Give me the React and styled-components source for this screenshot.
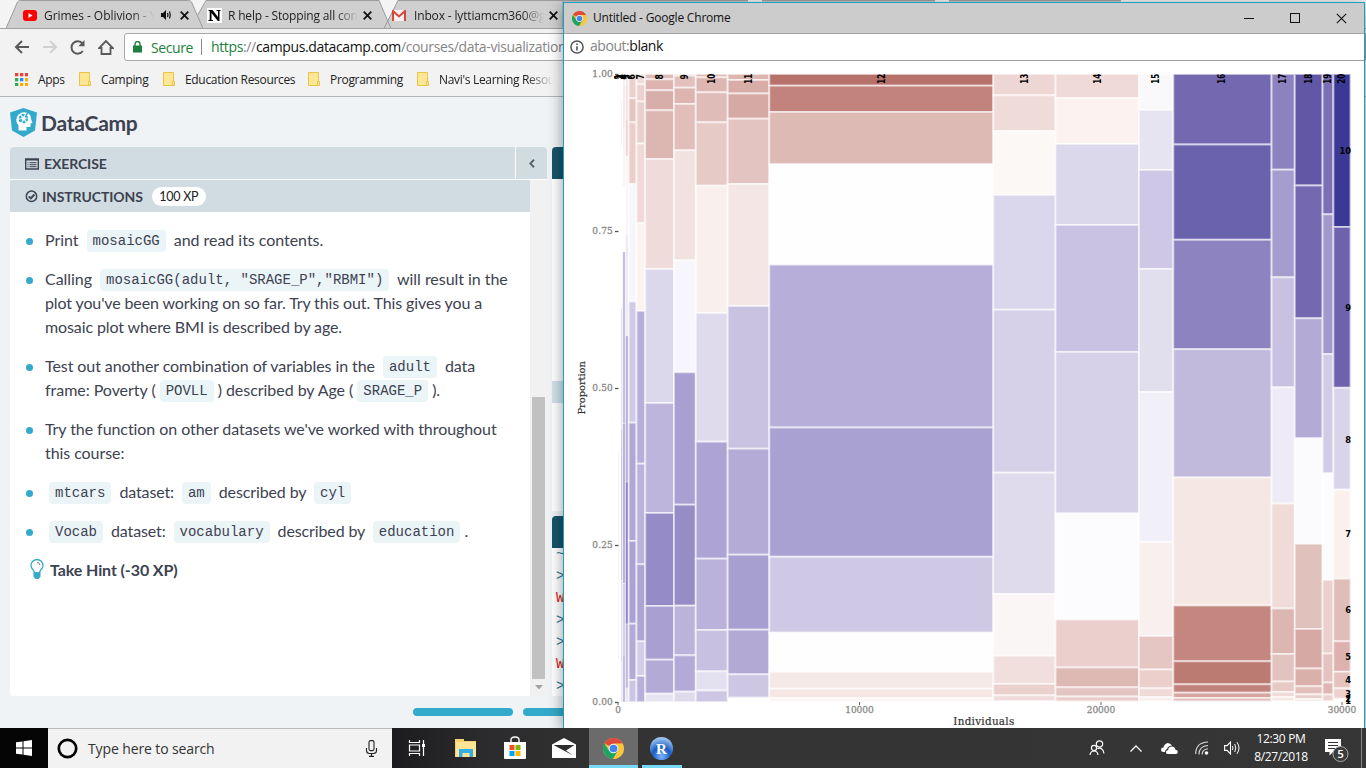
import React from 'react';
import styled, { createGlobalStyle, css } from 'styled-components';

const ui = '"Open Sans", "Noto Sans", sans-serif';
const GlobalStyle = createGlobalStyle`
  * { box-sizing: border-box; }
  body { margin: 0; overflow: hidden; }
  svg { display: block; flex: none; }
`;

const Desktop = styled.div`
  position: relative;
  width: 1366px;
  height: 768px;
  display: flex;
  flex-direction: column;
  overflow: hidden;
  background: #cdcdcd;
`;

/* ---------- browser window ---------- */
const Browser = styled.main`
  height: 728px;
  display: flex;
  flex-direction: column;
  background: #eff3f5;
  font-family: ${ui};
`;
const TabStrip = styled.div`
  position: relative;
  height: 29px;
  flex: none;
  background: #e3e3e3;
`;
const TabShapes = styled.svg`
  position: absolute;
  left: 0;
  top: 0;
`;
const TabRow = styled.div`
  position: relative;
  height: 29px;
  display: flex;
  padding-left: 23px;
`;
const Tab = styled.div`
  width: ${p => p.$w}px;
  height: 30px;
  display: flex;
  align-items: center;
  flex: none;
`;
const TabTitle = styled.span`
  width: ${p => p.$w}px;
  margin-left: ${p => p.$gap}px;
  margin-right: ${p => p.$after || 0}px;
  overflow: hidden;
  white-space: nowrap;
  font-size: 12px;
  letter-spacing: ${p => p.$ls || 0}px;
  color: #222;
  mask-image: linear-gradient(90deg, #000 calc(100% - 22px), transparent);
`;
const SpeakerIcon = styled.svg`
  margin: 0 6px 0 7px;
`;
const Toolbar = styled.div`
  height: 33px;
  flex: none;
  display: flex;
  align-items: flex-start;
  padding: 4px 0 0 14px;
  background: #f2f2f2;
`;
const NavIcon = styled.div`
  width: 28px;
  height: 28px;
  display: flex;
  align-items: center;
`;
const AddressBar = styled.div`
  flex: 1;
  height: 28px;
  margin-left: -2px;
  display: flex;
  align-items: center;
  padding-left: 8px;
  background: #fff;
  border: 1px solid #aaa;
  border-radius: 3px 0 0 3px;
  font-size: 14px;
  white-space: nowrap;
`;
const Secure = styled.span`
  color: #1c7f3c;
  margin-left: 9px;
  width: 50px;
  letter-spacing: -0.4px;
`;
const Url = styled.span`
  color: #111;
  border-left: 1px solid #888;
  line-height: 16px;
  padding-left: 9px;
  letter-spacing: ${p => p.$ls}px;
  i { font-style: normal; color: #1c7f3c; }
  b { font-weight: 400; color: #858585; }
`;
const Bookmarks = styled.div`
  height: 35px;
  flex: none;
  display: flex;
  align-items: center;
  padding-left: 15px;
  background: #f2f2f2;
  border-bottom: 1px solid #b4b4b4;
`;
const Bookmark = styled.div`
  width: ${p => p.$w}px;
  flex: none;
  display: flex;
  align-items: center;
  gap: 10px;
  overflow: hidden;
  white-space: nowrap;
  font-size: 12px;
  letter-spacing: -0.32px;
  color: #222;
  ${p => p.$fade && css`mask-image: linear-gradient(90deg, #000 80%, transparent);`}
`;

/* ---------- course page ---------- */
const Page = styled.div`
  flex: 1;
  display: flex;
  flex-direction: column;
  color: #3d4251;
  font-family: Lato, sans-serif;
`;
const Brand = styled.header`
  height: 50px;
  display: flex;
  align-items: center;
  padding: 0 0 0 10px;
  gap: 4px;
  font-size: 21px;
  font-weight: 700;
  letter-spacing: -0.25px;
`;
const Columns = styled.div`
  height: 549px;
  display: flex;
  gap: 5px;
  padding: 0 12px 0 10px;
`;
const LeftPanel = styled.section`
  width: 537px;
  display: flex;
  flex-direction: column;
  background: #fff;
  border-radius: 4px 4px 3px 3px;
  overflow: hidden;
`;
const Bar = styled.div`
  height: 32px;
  flex: none;
  display: flex;
  align-items: center;
  background: #d0dce1;
  font-size: 14px;
  font-weight: 700;
  letter-spacing: -0.1px;
`;
const BarTitle = styled.div`
  flex: 1;
  height: 100%;
  display: flex;
  align-items: center;
  gap: ${p => p.$gap}px;
  padding: 1px 0 0 15px;
`;
const Collapse = styled.div`
  width: 32px;
  height: 100%;
  display: flex;
  align-items: center;
  justify-content: center;
  border-left: 1px solid #fff;
`;
const XpBadge = styled.span`
  width: 54px;
  height: 19px;
  margin-left: 5px;
  border-radius: 10px;
  background: #fff;
  font-size: 12.5px;
  font-weight: 400;
  color: #222;
  line-height: 19px;
  text-align: center;
  letter-spacing: -0.25px;
`;
const PanelBody = styled.div`
  flex: 1;
  display: flex;
  margin-top: 1px;
`;
const Instructions = styled.div`
  width: 520px;
`;
const List = styled.ul`
  margin: 0;
  padding: 16px 0 0 35px;
  list-style: none;
  display: flex;
  flex-direction: column;
  gap: 15px;
  font-size: 16px;
  line-height: 24px;
`;
const Item = styled.li`
  position: relative;
  white-space: nowrap;
  &::before {
    content: '';
    position: absolute;
    left: -19px;
    top: 10px;
    width: 7px;
    height: 7px;
    border-radius: 50%;
    background: #33aacc;
  }
`;
const Line = styled.div`
  height: 24px;
  letter-spacing: ${p => p.$ls || 0}px;
`;
const Code = styled.code`
  display: inline-block;
  height: 22px;
  padding: 0 6px;
  margin: 2px 4px 0;
  vertical-align: top;
  border-radius: 4px;
  background: #ebf4f7;
  font: 14px/23px "Liberation Mono", monospace;
  letter-spacing: 0;
`;
const Hint = styled.div`
  display: flex;
  align-items: center;
  gap: 6px;
  height: 26px;
  margin-top: 13px;
  padding-left: 20px;
  font-size: 16px;
  font-weight: 700;
  letter-spacing: -0.1px;
`;
const Scrollbar = styled.div`
  width: 17px;
  display: flex;
  flex-direction: column;
  align-items: center;
  padding-top: 217px;
  background: #f1f1f1;
`;
const Thumb = styled.div`
  width: 13px;
  height: 282px;
  margin-bottom: 6px;
  background: #c1c1c1;
`;
const RightPanel = styled.section`
  flex: 1;
  display: flex;
  flex-direction: column;
`;
const DarkHead = styled.div`
  height: 32px;
  border-radius: 4px 0 0 0;
  background: #17546a;
`;
const Editor = styled.div`
  height: 332px;
  margin-bottom: 5px;
  padding-top: 202px;
  background: #fff;
`;
const ActiveLine = styled.div`
  height: 22px;
  background: #cfe3ea;
`;
const Console = styled.div`
  height: 148px;
  padding: 0 0 0 4px;
  overflow: hidden;
  background: #fff;
  display: flex;
  flex-direction: column;
  justify-content: flex-end;
`;
const ConsoleLine = styled.div`
  height: 22px;
  flex: none;
  font: 14px/24px "Liberation Mono", monospace;
  color: ${p => (p.$error ? '#e01b1b' : '#2f7891')};
`;
const Progress = styled.div`
  display: flex;
  gap: 10px;
  padding: 12px 0 0 413px;
`;
const Pill = styled.div`
  width: 100px;
  height: 8px;
  border-radius: 4px;
  background: #33aacc;
`;

/* ---------- plot window ---------- */
const Popup = styled.section`
  position: absolute;
  left: 563px;
  top: 2px;
  width: 802px;
  height: 726px;
  display: flex;
  flex-direction: column;
  background: #fff;
  border: 1px solid #1c9fc0;
  border-bottom: 0;
  box-shadow: 0 3px 14px rgba(0, 0, 0, 0.42);
  font-family: ${ui};
`;
const TitleBar = styled.div`
  height: 31px;
  flex: none;
  display: flex;
  align-items: center;
  padding-left: 8px;
  background: #ccc;
  border-bottom: 1px solid #a3a3a3;
  font-size: 12px;
  color: #111;
`;
const WindowTitle = styled.span`
  flex: 1;
  margin: -2px 0 0 6px;
  letter-spacing: -0.2px;
`;
const WindowButton = styled.div`
  width: 46px;
  display: flex;
  justify-content: center;
`;
const PopupAddress = styled.div`
  height: 27px;
  flex: none;
  display: flex;
  align-items: center;
  padding-left: 6px;
  border-bottom: 1px solid #a0a0a0;
`;
const AboutText = styled.div`
  margin: -2px 0 0 6px;
  font-size: 14px;
  line-height: 20px;
  color: ${p => (p.$dim ? '#858585' : '#111')};
  letter-spacing: -0.45px;
`;
const Dim = styled.span`
  color: #858585;
`;

/* ---------- taskbar ---------- */
const Taskbar = styled.footer`
  position: relative;
  height: 40px;
  display: flex;
  background: linear-gradient(90deg, #1c1b1d 392px, #2b2b2d 480px, #333 620px, #363636);
  color: #fff;
  font-family: ${ui};
`;
const Start = styled.div`
  width: 48px;
  display: flex;
  align-items: center;
  justify-content: center;
  background: #050505;
`;
const Search = styled.div`
  width: 344px;
  display: flex;
  align-items: center;
  padding: 0 14px 0 9px;
  gap: 10px;
  background: #f2f2f2;
  border-top: 1px solid #b9b9b9;
  color: #333;
  font-size: 14px;
  letter-spacing: -0.12px;
  span { flex: 1; }
`;
const Launch = styled.div`
  width: 49.2px;
  display: flex;
  align-items: center;
  justify-content: center;
  background: ${p => (p.$active ? '#6b6b6b' : 'transparent')};
  border-bottom: ${p => (p.$open ? '3px solid #76d9f5' : '0')};
  padding-top: ${p => (p.$open ? 3 : 0)}px;
`;
const OpenApp = styled(Launch)`
  width: 40px;
  margin-left: 4px;
`;
const Tray = styled.div`
  margin-left: auto;
  display: flex;
`;
const TrayCell = styled.div`
  width: ${p => p.$w}px;
  display: flex;
  align-items: center;
  justify-content: center;
`;
const Clock = styled.div`
  width: 76px;
  padding-top: 2px;
  text-align: center;
  font-size: 12px;
  line-height: 18px;
  letter-spacing: -0.35px;
`;
const ShowDesktop = styled.div`
  width: 5px;
  border-left: 1px solid #888;
`;

/* ---------- icons ---------- */
const CloseX = ({ size = 9, w = 1.8 }) => (
  <svg width={size} height={size} viewBox="0 0 9 9"><path d="M.7.7l7.6 7.6M8.3.7L.7 8.3" stroke="#111" strokeWidth={w} /></svg>
);
const ChromeIcon = ({ size }) => (
  <svg width={size} height={size} viewBox="0 0 48 48">
    <circle cx="24" cy="24" r="24" fill="#fbc637" />
    <path d="M24 24L3.2 12A24 24 0 0 1 44.8 12.500L24 13z" fill="#dd4b3e" />
    <path d="M3.200 12A24 24 0 0 0 23 48L34 30 24 24 14.500 30z" fill="#1da362" />
    <path d="M24 13h20.800A24 24 0 0 1 23 48L33.500 29.500z" fill="#fbc637" />
    <circle cx="24" cy="24" r="11" fill="#f1f1f1" />
    <circle cx="24" cy="24" r="8.800" fill="#4285f4" />
  </svg>
);
const Folder = () => (
  <svg width="12" height="14" viewBox="0 0 12 14">
    <path d="M.5.5h10v9h1v4H.5z" fill="#ffe694" stroke="#e8c449" /><path d="M9.500 13V9.500h1.500" fill="none" stroke="#e8c449" />
  </svg>
);
const AppsIcon = () => {
  const c = ['#ea4335', '#ea4335', '#ea4335', '#34a853', '#1a8cff', '#fbab00', '#34a853', '#fbab00', '#fbab00'];
  return <svg width="13" height="13">{c.map((f, i) => <rect key={i} x={(i % 3) * 5} y={Math.floor(i / 3) * 5} width="3.300" height="3.300" fill={f} />)}</svg>;
};

/* ---------- mosaic data: [x0, x1, edges, fills] ---------- */
const mosaic = [
  [618.2, 619, [454, 658], ['#ededf3']],
  [621, 622, [100, 106, 146], ['#f7efee', '#f7efee']],
  [621, 622.2, [308, 429, 581, 662, 702], ['#e2deef', '#c8c1e2', '#d8d3e9', '#e6e3f1']],
  [623, 625, [74, 86, 127, 186], ['#f8edeb', '#f5e8e6', '#fbf1ef']],
  [622.8, 625.2, [252, 423.5, 583.5, 655, 702], ['#c4bde0', '#b9b0da', '#d3cde8', '#c4bde0']],
  [625.7, 628.2, [74, 84, 119.3, 156, 235, 336, 482, 624, 688, 702], ['#f5e6e5', '#f5e3e1', '#efd5d3', '#fcf5f3', '#ebe9f6', '#b5addb', '#8f85c4', '#bdb5dc', '#e7e4f2']],
  [628.7, 636.5, [74, 98.3, 122.3, 184, 301.5, 422.7, 541, 623.7, 680, 702], ['#ebd1ce', '#e4c4c0', '#e9cec9', '#f7f6fc', '#d0cae6', '#b0a7d5', '#aba1d2', '#b3aad7', '#cbc5e3']],
  [636.5, 645.2, [74, 84.3, 101.5, 143.5, 223, 311, 463.7, 564.3, 641.3, 676, 702], ['#efdcda', '#ecd1cf', '#e9d0cd', '#efdad8', '#faf3f0', '#b7afd9', '#bbb3db', '#ada4d2', '#d3cde7', '#b8b0da']],
  [645.2, 674, [74, 79.3, 90.3, 110.3, 159, 269, 403, 513, 606, 659.7, 693.7, 702], ['#dfbcb8', '#dcb3af', '#d7aea9', '#dcb7b1', '#efdcda', '#dcd8ec', '#bdb5dc', '#958bc6', '#a99fd1', '#b3abd6', '#e7e4f1']],
  [674, 695.8, [74, 75.7, 87.7, 104, 150.3, 260.3, 372.3, 504.7, 605.7, 655.3, 691.7, 702], ['#e8c9c5', '#e2c0bc', '#dcb4b0', '#e1beba', '#f1e2df', '#f7f6fc', '#a99fd1', '#978dc6', '#bcb3db', '#b4aad7', '#dfdbec']],
  [695.8, 727.7, [74, 77.3, 92.3, 122.3, 185.7, 313, 441.7, 558.7, 630, 671.3, 690.5, 702], ['#dfb9b4', '#ddb6b1', '#e0bcb8', '#e6cac6', '#f9f0ee', '#dfdbec', '#ada4d3', '#bab2da', '#c7c0e1', '#e3e0ef', '#cdc7e5']],
  [727.7, 769.3, [74, 80, 93.5, 118.7, 184, 306, 448.7, 554.7, 629.7, 674.3, 697.5], ['#ddb5b1', '#d8aca7', '#d6a9a4', '#e3c4c0', '#f4e6e4', '#c9c2e1', '#b4acd7', '#a89fd1', '#b2a9d5', '#cdc7e4']],
  [769.3, 993.3, [74, 85.7, 112, 164.3, 264.7, 427.5, 556.8, 632.7, 671.7, 688.7, 698, 702], ['#b5716a', '#c2837d', '#ddbab4', '#fefefe', '#b7afd9', '#aaa1d3', '#cfc9e6', '#fefefe', '#f5e9e6', '#f6e6e4', '#fcf5f4']],
  [993.3, 1055.5, [74, 95.3, 131, 195, 309.7, 472.7, 594, 655.7, 684, 695.3, 701], ['#edd6d3', '#efdcd9', '#fbf8f6', '#dad6ec', '#d6d1e9', '#dfdbec', '#faf6f5', '#f1dfdd', '#ead1cd', '#efdcda']],
  [1055.5, 1139, [74, 98, 144, 225, 352, 513.5, 619.5, 667.5, 687.3, 696.5, 701.3], ['#efdad8', '#fcf2f0', '#dcd8ec', '#c9c2e3', '#d6d1e9', '#fcfcfe', '#ebcfcc', '#deb9b3', '#e3c4c0', '#e9cdca']],
  [1139, 1173.3, [74, 110, 170, 269, 392, 542, 636, 669.5, 688.3, 697, 701], ['#f9f9fc', '#e7e4f2', '#cec7e5', '#e1deee', '#f1f0f9', '#f8f0ee', '#e5c6c2', '#eacfcb', '#efdad7', '#f8eeec']],
  [1173.3, 1271.6, [74, 144.5, 239.8, 349.2, 477.5, 605.5, 661.3, 684.3, 692.7, 698, 701.3], ['#7469b1', '#6b62ae', '#8d83c1', '#c1badc', '#f5e7e4', '#c4877f', '#bb7b72', '#c1827c', '#d7a6a1', '#e3bdb9']],
  [1271.6, 1294.8, [74, 169.7, 277.3, 387.3, 503.5, 608.5, 654, 681.5, 692, 697, 701], ['#8d82c0', '#a69dcf', '#c8c1e1', '#eeebf6', '#efdbd8', '#dcb6b1', '#e3c3bf', '#e7c9c5', '#efdad8', '#f5e8e6']],
  [1294.8, 1322.6, [74, 185.5, 318.3, 438.3, 543.8, 629, 668.5, 686.3, 694.3, 699, 701.3], ['#6256a6', '#7469b1', '#b3aad6', '#fbfbfd', '#e1c1bc', '#d7a9a4', '#dbb0ab', '#e3bfbb', '#e9ceca', '#f3e3e1']],
  [1322.6, 1333.4, [74, 214.3, 354, 473.3, 580, 653.5, 682.5, 694.5, 701], ['#7b70b5', '#a298cc', '#d1cbe6', '#fcfcfe', '#ebcfcc', '#e4c2be', '#dfb6b1', '#ecd2cf']],
  [1333.4, 1350.5, [74, 227, 387.8, 489.7, 578.7, 641.3, 671.8, 688.3, 698.5], ['#3b3896', '#6e62af', '#d9d4ea', '#faf1ef', '#e1bdb8', '#ddb2ae', '#e5c2be', '#edd1cf']],
];
const topLabels = [
  [619, '1'], [620, '2'], [621.5, '3'], [623.5, '4'], [626.5, '5'], [632, '6'], [641, '7'], [659.5, '8'], [685, '9'], [711.5, '10'], [748.7, '11'], [881.5, '12'],
  [1024.5, '13'], [1097.5, '14'], [1155.5, '15'], [1222, '16'], [1283, '17'], [1308.5, '18'], [1328, '19'], [1341.7, '20'],
];
const rightLabels = [[150.5, '10'], [307.5, '9'], [439.7, '8'], [534, '7'], [609.7, '6'], [656.5, '5'], [680.3, '4'], [693.5, '3'], [699, '2'], [701, '1']];

const Mosaic = () => (
  <svg width="800" height="667" viewBox="564 61 800 667">
    {mosaic.map(([x0, x1, edges, fills], c) => (
      <g key={c}>
        {fills.map((f, i) => (
          <rect key={i} x={x0} y={edges[i]} width={x1 - x0} height={edges[i + 1] - edges[i]} fill={f}
            stroke="#fff" strokeOpacity="0.55" strokeWidth={x1 - x0 < 4 ? 0.5 : 2} />
        ))}
      </g>
    ))}
    <g fontFamily="DejaVu Serif, serif" fontSize="9" fill="#8a8a8a" stroke="#8a8a8a" strokeWidth="0.3">
      {[['1.00', 74], ['0.75', 231], ['0.50', 388], ['0.25', 545], ['0.00', 702]].map(([t, y]) => (
        <g key={t}>
          <text x="612.800" y={y + 3.300} textAnchor="end" textLength="20.500">{t}</text>
          <path d={`M615 ${y + 0.5}h3.500`} stroke="#555" strokeWidth="1.300" />
        </g>
      ))}
      {[['0', 618], ['10000', 859.5], ['20000', 1101], ['30000', 1342]].map(([t, x]) => (
        <g key={t}>
          <text x={x} y="713.300" textAnchor="middle">{t}</text>
          <path d={`M${x} 702v3`} stroke="#666" strokeWidth="1" />
        </g>
      ))}
    </g>
    <g fontFamily="DejaVu Serif, serif" fontSize="10.400" fill="#333" stroke="#333" strokeWidth="0.2">
      <text x="953.300" y="724.500" textLength="61">Individuals</text>
      <text transform="translate(584.500 414.500) rotate(-90)" textLength="53.500" fontSize="10">Proportion</text>
    </g>
    <g fontFamily="DejaVu Sans, sans-serif" fontWeight="700" fontSize="8.300" fill="#000">
      {topLabels.map(([x, t]) => (
        <text key={t} transform={`translate(${x + 3.2} ${t.length > 1 ? 83.7 : 79.5}) rotate(-90)`} textLength={t.length > 1 ? 10 : 5.3} lengthAdjust="spacingAndGlyphs" fontSize="9.600">{t}</text>
      ))}
      {rightLabels.map(([y, t]) => <text key={t} x="1351" y={y + 3} textAnchor="end">{t}</text>)}
    </g>
  </svg>
);

const Shapes = () => (
  <TabShapes width="1366" height="29" viewBox="0 0 1366 29">
    <rect width="1366" height="29" fill="#f4f4f4" />
    <path d="M384 28.500l7-14 7-14h165v28zM192 28.500l6-14L206 .5h173l12 28z" fill="#cfcfcf" stroke="#9b9b9b" />
    <path d="M6 28.500L17.500 2q1-1.500 3-1.500h168q2 0 3 1.500L203 28.500z" fill="#cfcfcf" stroke="#9b9b9b" />
    <path d="M563 .8h185M762 .8h173M949 .8h172" stroke="#a2a2a2" strokeWidth="1.500" />
    <path d="M0 28.500h1366" stroke="#a2a2a2" />
  </TabShapes>
);

export default function App() {
  return (
    <Desktop>
      <GlobalStyle />
      <Browser>
        <TabStrip>
          <Shapes />
          <TabRow>
            <Tab $w={184}>
              <svg width="14" height="11" viewBox="0 0 14 11"><rect width="14" height="11" rx="3" fill="#f00" /><path d="M5.500 3v5l4-2.500z" fill="#fff" /></svg>
              <TabTitle $w={110} $gap={7} $ls={-0.05}>Grimes - Oblivion - YouTube</TabTitle>
              <SpeakerIcon width="13" height="10" viewBox="0 0 13 10"><path d="M0 3h2l3-3v10L2 7H0z" fill="#111" /><path d="M6.500 3q1 2 0 4M8.500 1.500q1.500 3.500 0 7" stroke="#111" strokeWidth="1.200" fill="none" /></SpeakerIcon>
              <CloseX />
            </Tab>
            <Tab $w={185}>
              <svg width="15" height="15" viewBox="0 0 15 15"><rect width="15" height="15" fill="#fff" /><path d="M1.500 2h4l5.500 7V3H9.500V2h4v1h-1v10h-1.700L4.500 5v7H6v1H1.500v-1h1.200V3H1.500z" fill="#000" /></svg>
              <TabTitle $w={130} $gap={6} $after={5} $ls={-0.17}>R help - Stopping all console</TabTitle>
              <CloseX />
            </Tab>
            <Tab $w={170}>
              <svg width="14" height="11" viewBox="0 0 14 11"><rect x="1" width="12" height="11" fill="#f4f1f0" /><path d="M1 11V1l6 5.500L13 1v10" fill="none" stroke="#d8473a" strokeWidth="2" /></svg>
              <TabTitle $w={130} $gap={8} $after={5} $ls={-0.15}>Inbox - lyttiamcm360@gmail</TabTitle>
              <CloseX />
            </Tab>
          </TabRow>
        </TabStrip>
        <Toolbar>
          <NavIcon><svg width="16" height="14" viewBox="0 0 16 14"><path d="M15 7H2M8 1L2 7l6 6" stroke="#5a5a5a" strokeWidth="2" fill="none" /></svg></NavIcon>
          <NavIcon><svg width="16" height="14" viewBox="0 0 16 14"><path d="M1 7h13M8 1l6 6-6 6" stroke="#d0d0d0" strokeWidth="2" fill="none" /></svg></NavIcon>
          <NavIcon><svg width="16" height="15" viewBox="0 0 16 15"><path d="M12.800 11A6.200 6.200 0 1 1 12.500 3.500" stroke="#5a5a5a" strokeWidth="2" fill="none" /><path d="M14.500 0v6.200H8.300z" fill="#5a5a5a" /></svg></NavIcon>
          <NavIcon><svg width="16" height="15" viewBox="0 0 16 15"><path d="M8 1L1.200 8H3.500v6h9V8h2.300z" stroke="#5a5a5a" strokeWidth="1.800" fill="none" /></svg></NavIcon>
          <AddressBar>
            <svg width="9" height="12" viewBox="0 0 9 12"><rect y="4.500" width="9" height="7" fill="#1c7f3c" /><path d="M2 5V3a2.500 2.500 0 0 1 5 0v2" stroke="#1c7f3c" strokeWidth="1.400" fill="none" /></svg>
            <Secure>Secure</Secure>
            <Url $ls={-0.36}><i>https</i><b>://</b>campus.datacamp.com<b>/courses/data-visualization-with-ggplot2</b></Url>
          </AddressBar>
        </Toolbar>
        <Bookmarks>
          <Bookmark $w={64}><AppsIcon />Apps</Bookmark>
          <Bookmark $w={84}><Folder />Camping</Bookmark>
          <Bookmark $w={145}><Folder />Education Resources</Bookmark>
          <Bookmark $w={109}><Folder />Programming</Bookmark>
          <Bookmark $w={137} $fade><Folder />Navi's Learning Resources</Bookmark>
        </Bookmarks>
        <Page>
          <Brand>
            <svg width="27" height="29" viewBox="0 0 27 29">
              <path d="M13.500 0L27 4.500 25 22.500 13.500 29 2 22.500 0 4.500z" fill="#33aacc" />
              <path d="M8.500 22.500v-5Q5 13 7 9q3-5.500 9-4.500 5 1 5 6.500l1.500 4-2 .5v3.500h-4v3.500z" fill="#fff" />
              <circle cx="13.500" cy="10.500" r="3.500" fill="none" stroke="#33aacc" strokeWidth="2.500" strokeDasharray="2.600 1" /><path d="M9 13l3-1M16 7l2-2" stroke="#33aacc" strokeWidth="1.500" />
            </svg>
            DataCamp
          </Brand>
          <Columns>
            <LeftPanel>
              <Bar>
                <BarTitle $gap={5}>
                  <svg width="14" height="12" viewBox="0 0 14 12"><path d="M.7 1h12.600v10H.7z" fill="none" stroke="#3d4251" strokeWidth="1.400" /><path d="M1 1.700h12" stroke="#3d4251" strokeWidth="1.500" /><path d="M2.500 4.700h1M4.500 4.700h7M2.500 6.700h1M4.500 6.700h7M2.500 8.700h1M4.500 8.700h7" stroke="#3d4251" /></svg>
                  EXERCISE
                </BarTitle>
                <Collapse><svg width="6" height="9" viewBox="0 0 6 9"><path d="M5 .8L1.300 4.500 5 8.200" fill="none" stroke="#5b626c" strokeWidth="2" /></svg></Collapse>
              </Bar>
              <PanelBody>
                <Instructions>
                  <Bar>
                    <BarTitle $gap={4}>
                      <svg width="13" height="13" viewBox="0 0 13 13"><circle cx="6.500" cy="6.300" r="5.200" fill="none" stroke="#3d4251" strokeWidth="1.500" /><path d="M3.800 6.300l2 2L9.400 4.500" fill="none" stroke="#3d4251" strokeWidth="1.900" /></svg>
                      INSTRUCTIONS
                      <XpBadge>100 XP</XpBadge>
                    </BarTitle>
                  </Bar>
                  <List>
                    <Item><Line $ls={-0.04}>Print <Code>mosaicGG</Code> and read its contents.</Line></Item>
                    <Item>
                      <Line $ls={-0.04}>Calling <Code>mosaicGG(adult, "SRAGE_P","RBMI")</Code> will result in the</Line>
                      <Line $ls={-0.12}>plot you've been working on so far. Try this out. This gives you a</Line>
                      <Line $ls={-0.11}>mosaic plot where BMI is described by age.</Line>
                    </Item>
                    <Item>
                      <Line $ls={-0.08}>Test out another combination of variables in the <Code>adult</Code> data</Line>
                      <Line $ls={-0.04}>frame: Poverty (<Code>POVLL</Code>) described by Age (<Code>SRAGE_P</Code>).</Line>
                    </Item>
                    <Item>
                      <Line $ls={-0.07}>Try the function on other datasets we've worked with throughout</Line>
                      <Line $ls={-0.07}>this course:</Line>
                    </Item>
                    <Item><Line $ls={-0.12}><Code>mtcars</Code> dataset: <Code>am</Code> described by <Code>cyl</Code></Line></Item>
                    <Item><Line $ls={-0.12}><Code>Vocab</Code> dataset: <Code>vocabulary</Code> described by <Code>education</Code>.</Line></Item>
                  </List>
                  <Hint>
                    <svg width="14" height="20" viewBox="0 0 14 20"><path d="M4.500 14Q4.200 12 2.500 10 1 8.500 1 6.500a6 6 0 0 1 12 0q0 2-1.500 3.500Q9.800 12 9.500 14z" fill="#fff" stroke="#33aacc" strokeWidth="1.300" /><path d="M3.500 13.500h7v4l-2 2.500h-3l-2-2.500z" fill="#33aacc" /><path d="M7 3.500q2.500 0 3 2.500" fill="none" stroke="#777" /></svg>
                    Take Hint (-30 XP)
                  </Hint>
                </Instructions>
                <Scrollbar>
                  <Thumb />
                  <svg width="8" height="5" viewBox="0 0 8 5"><path d="M0 0h8L4 4.500z" fill="#a3a3a3" /></svg>
                </Scrollbar>
              </PanelBody>
            </LeftPanel>
            <RightPanel>
              <DarkHead />
              <Editor><ActiveLine /></Editor>
              <DarkHead />
              <Console>
                <ConsoleLine>~</ConsoleLine>
                <ConsoleLine>&gt;</ConsoleLine>
                <ConsoleLine $error>Warning</ConsoleLine>
                <ConsoleLine>&gt;</ConsoleLine>
                <ConsoleLine>&gt;</ConsoleLine>
                <ConsoleLine $error>Warning</ConsoleLine>
                <ConsoleLine>&gt;</ConsoleLine>
              </Console>
            </RightPanel>
          </Columns>
          <Progress><Pill /><Pill /></Progress>
        </Page>
      </Browser>

      <Popup>
        <TitleBar>
          <ChromeIcon size={15} />
          <WindowTitle>Untitled - Google Chrome</WindowTitle>
          <WindowButton><svg width="10" height="10"><path d="M0 5.500h10" stroke="#111" /></svg></WindowButton>
          <WindowButton><svg width="10" height="10"><rect x=".5" y=".5" width="9" height="9" fill="none" stroke="#111" /></svg></WindowButton>
          <WindowButton><CloseX size={11} w={0.9} /></WindowButton>
        </TitleBar>
        <PopupAddress>
          <svg width="14" height="14" viewBox="0 0 14 14"><circle cx="7" cy="7" r="6.100" fill="none" stroke="#555" strokeWidth="1.500" /><path d="M7 6.200V10.500M7 3.500v1.500" stroke="#555" strokeWidth="1.600" /></svg>
          <AboutText><Dim>about:</Dim>blank</AboutText>
        </PopupAddress>
        <Mosaic />
      </Popup>

      <Taskbar>
        <Start>
          <svg width="16" height="16" viewBox="0 0 16 16"><path d="M0 2.300l6.500-.9v6.100H0zM7.500 1.200L16 0v7.500H7.500zM0 8.500h6.500v6.100L0 13.700zM7.500 8.500H16V16l-8.500-1.200z" fill="#fff" /></svg>
        </Start>
        <Search>
          <svg width="21" height="21" viewBox="0 0 21 21"><circle cx="10.500" cy="10.500" r="8.700" fill="none" stroke="#000" strokeWidth="2.700" /></svg>
          <span>Type here to search</span>
          <svg width="13" height="17" viewBox="0 0 13 17"><rect x="4" y=".6" width="5" height="10" rx="1.500" fill="none" stroke="#222" strokeWidth="1.100" /><path d="M1.500 8v2.500q0 3 3 3h4q3 0 3-3V8M6.500 13.500v3M4 16.400h5" stroke="#222" strokeWidth="1.100" fill="none" /></svg>
        </Search>
        <Launch>
          <svg width="18" height="16" viewBox="0 0 18 16"><path d="M1.500 0v2.500h10V0M1.500 16v-2.500h10V16M1.500 5h10v6h-10zM15.500 0v16" fill="none" stroke="#fff" strokeWidth="1.200" /><path d="M14 4h3v3h-3z" fill="#fff" /></svg>
        </Launch>
        <Launch>
          <svg width="22" height="19" viewBox="0 0 22 19"><path d="M0 0h9v2h12v16H0z" fill="#f4d06f" /><path d="M1 3h20v15H1z" fill="#ffe495" /><path d="M4 18v-8h14v8h-3.500v-4h-7v4z" fill="#33aee4" /></svg>
        </Launch>
        <Launch>
          <svg width="24" height="24" viewBox="0 0 24 24"><path d="M8 7V4q0-3 4-3t4 3v3" fill="none" stroke="#fff" strokeWidth="1.400" /><path d="M1 6h22v16q0 1-1 1H2q-1 0-1-1z" fill="#fff" /><path d="M6.500 9h5v5h-5z" fill="#f25022" /><path d="M12.500 9h5v5h-5z" fill="#7fba00" /><path d="M6.500 15h5v5h-5z" fill="#00a4ef" /><path d="M12.500 15h5v5h-5z" fill="#ffb900" /></svg>
        </Launch>
        <Launch>
          <svg width="24" height="20" viewBox="0 0 24 20"><path d="M0 6.500L12 0l12 6.500V20H0z" fill="#fff" /><path d="M1.500 7h21l-8.500 5.500 7 5z" fill="#2d2d2f" /></svg>
        </Launch>
        <Launch $active $open><ChromeIcon size={21} /></Launch>
        <OpenApp $open>
          <svg width="23" height="23" viewBox="0 0 23 23"><defs><radialGradient id="rg" cx=".5" cy=".85" r=".8"><stop offset="0" stopColor="#7db5ff" /><stop offset=".5" stopColor="#1b5cc4" /><stop offset="1" stopColor="#9cc4f2" /></radialGradient></defs><circle cx="11.500" cy="11.500" r="11.500" fill="url(#rg)" /><text x="11.500" y="16.500" textAnchor="middle" fontFamily="Liberation Serif, serif" fontSize="15" fontWeight="700" fill="#fff">R</text></svg>
        </OpenApp>
        <Tray>
          <TrayCell $w={40}><svg width="16" height="17" viewBox="0 0 16 17"><circle cx="10.500" cy="4" r="3.200" fill="none" stroke="#fff" strokeWidth="1.200" /><circle cx="5" cy="8" r="2.600" fill="none" stroke="#fff" strokeWidth="1.200" /><path d="M1 15q.5-4 4-4t4 4M8.500 8.500q5.500-1.500 6.500 5" fill="none" stroke="#fff" strokeWidth="1.200" /></svg></TrayCell>
          <TrayCell $w={38}><svg width="12" height="7" viewBox="0 0 12 7"><path d="M.5 6.500L6 1l5.500 5.500" fill="none" stroke="#fff" strokeWidth="1.300" /></svg></TrayCell>
          <TrayCell $w={28}><svg width="17" height="11" viewBox="0 0 17 11"><path d="M2.500 9Q0 9 0 6.700T2.500 4.500Q3 1 6.500 0q3 0 4.500 2.500Q7 2.500 6 6 4 6.500 4 9z" fill="#fff" /><path d="M6.500 11Q4.800 11 5 9t2-1.800Q7.500 3.500 10.800 3.500q3 0 3.500 3Q17 7 16.800 9T15 11z" fill="#fff" /></svg></TrayCell>
          <TrayCell $w={38}><svg width="14" height="14" viewBox="0 0 14 14"><path d="M.7 13Q.7 1.500 13 1M4 13.500Q4 5 13 4.500M7.200 13.500Q7 8.500 13 7.800" fill="none" stroke="#ddd" strokeWidth="1.100" /><circle cx="11.500" cy="12" r="1.800" fill="#fff" /></svg></TrayCell>
          <TrayCell $w={22}><svg width="17" height="14" viewBox="0 0 17 14"><path d="M.6 4.600h2.500L6.500 1v12L3.100 9.400H.6z" fill="none" stroke="#fff" strokeWidth="1.100" /><path d="M8.500 5q1 2 0 4M10.700 3q2.300 4 0 8M13 1.200q4 5.800 0 11.600" fill="none" stroke="#fff" /></svg></TrayCell>
          <Clock>12:30 PM<br />8/27/2018</Clock>
          <TrayCell $w={40}><svg width="28" height="28" viewBox="0 0 28 28"><path d="M0 5h16v13H8l-3.500 3.500V18H0z" fill="#fff" /><path d="M3 8.500h10M3 11.500h10M3 14.500h7" stroke="#333" /><circle cx="15.500" cy="20" r="7.500" fill="#3b3b3b" stroke="#aaa" /><text x="15.500" y="24" textAnchor="middle" fontFamily="Open Sans, sans-serif" fontSize="11.500" fontWeight="600" fill="#fff">5</text></svg></TrayCell>
          <TrayCell $w={2} />
          <ShowDesktop />
        </Tray>
      </Taskbar>
    </Desktop>
  );
}
